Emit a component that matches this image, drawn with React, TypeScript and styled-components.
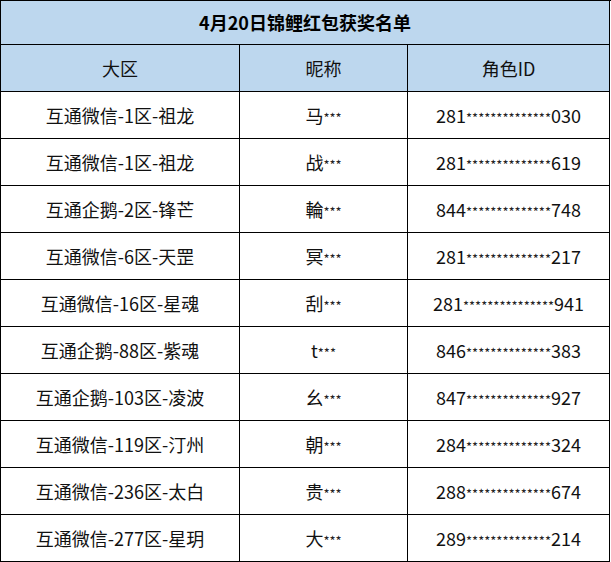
import React from "react";
import styled, { createGlobalStyle } from "styled-components";

const Global = createGlobalStyle`
  html, body { margin: 0; padding: 0; background: #ffffff; }
  body { font-family: "Noto Sans CJK SC", "Noto Sans", sans-serif; color: #111; }
`;

const Table = styled.div`
  width: 610px;
  display: grid;
  grid-template-columns: 239px 168px 202px;
  border-left: 1px solid #000;
  border-top: 1px solid #000;
`;

const TitleCell = styled.div`
  grid-column: 1 / -1;
  height: 43px;
  line-height: 43px;
  border-right: 1px solid #000;
  border-bottom: 1px solid #000;
  background: #bdd7ee;
  text-align: center;
  font-size: 18px;
  font-weight: 700;
  color: #000;
`;

const Cell = styled.div<{ $head?: boolean }>`
  height: 46px;
  line-height: 46px;
  border-right: 1px solid #000;
  border-bottom: 1px solid #000;
  background: ${(p) => (p.$head ? "#bdd7ee" : "#ffffff")};
  text-align: center;
  font-size: 18px;
  white-space: nowrap;
`;

const Stars = styled.span`
  font-size: 13px;
  vertical-align: baseline;
  color: #222;
`;

const rows: [string, string, string, number, string][] = [
  ["互通微信-1区-祖龙", "马", "281", 14, "030"],
  ["互通微信-1区-祖龙", "战", "281", 14, "619"],
  ["互通企鹅-2区-锋芒", "輪", "844", 14, "748"],
  ["互通微信-6区-天罡", "冥", "281", 14, "217"],
  ["互通微信-16区-星魂", "刮", "281", 15, "941"],
  ["互通企鹅-88区-紫魂", "t", "846", 14, "383"],
  ["互通企鹅-103区-凌波", "幺", "847", 14, "927"],
  ["互通微信-119区-汀州", "朝", "284", 14, "324"],
  ["互通微信-236区-太白", "贵", "288", 14, "674"],
  ["互通微信-277区-星玥", "大", "289", 14, "214"],
];

export default function App() {
  return (
    <>
      <Global />
      <Table>
        <TitleCell>4月20日锦鲤红包获奖名单</TitleCell>
        <Cell $head>大区</Cell>
        <Cell $head>昵称</Cell>
        <Cell $head>角色ID</Cell>
        {rows.map(([zone, nick, a, n, b], i) => (
          <React.Fragment key={i}>
            <Cell>{zone}</Cell>
            <Cell>
              {nick}
              <Stars>***</Stars>
            </Cell>
            <Cell>
              {a}
              <Stars>{"*".repeat(n)}</Stars>
              {b}
            </Cell>
          </React.Fragment>
        ))}
      </Table>
    </>
  );
}
